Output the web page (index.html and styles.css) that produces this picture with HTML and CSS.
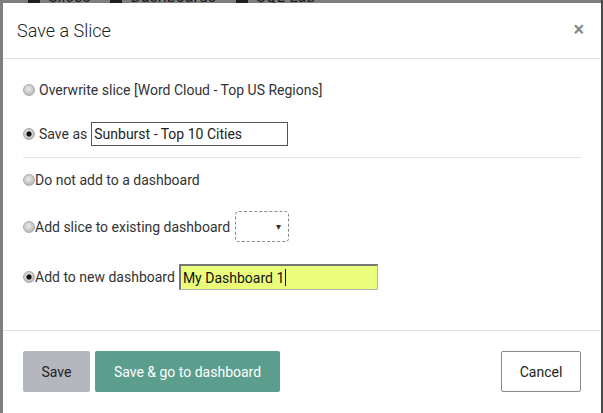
FILE: index.html
```html
<!DOCTYPE html>
<html>
<head>
<meta charset="utf-8">
<link rel="stylesheet" href="styles.css">
</head>
<body>
<div class="backdrop">
  <div class="nav"><span class="nav-item"><span class="nav-ico"></span>Slices</span><span class="nav-item"><span class="nav-ico"></span>Dashboards</span><span class="nav-item"><span class="nav-ico"></span>SQL Lab</span></div>
</div>
<div class="modal">
  <div class="modal-header">
    <h4 class="modal-title">Save a Slice</h4>
    <span class="close">×</span>
  </div>
  <div class="modal-body">
    <label class="row row-1"><input type="radio" class="radio" name="a"><span class="lbl gap">Overwrite slice [Word Cloud - Top US Regions]</span></label>
    <label class="row row-2"><input type="radio" class="radio" name="a" checked><span class="lbl gap">Save as</span><input class="text-input name-input" type="text" value="Sunburst - Top 10 Cities"></label>
    <hr class="divider">
    <label class="row row-3"><input type="radio" class="radio" name="b"><span class="lbl">Do not add to a dashboard</span></label>
    <label class="row row-4"><input type="radio" class="radio" name="b"><span class="lbl">Add slice to existing dashboard</span><span class="select"><span class="arrow">▾</span></span></label>
    <label class="row row-5"><input type="radio" class="radio" name="b" checked><span class="lbl">Add to new dashboard</span><span class="new-input">My Dashboard 1<span class="caret"></span></span></label>
  </div>
  <div class="modal-footer">
    <button class="btn btn-save">Save</button>
    <button class="btn btn-go">Save &amp; go to dashboard</button>
    <span class="spacer"></span>
    <button class="btn btn-cancel">Cancel</button>
  </div>
</div>
</body>
</html>
```

FILE: styles.css
```css
html, body {
  margin: 0;
  padding: 0;
}
body {
  width: 603px;
  height: 413px;
  overflow: hidden;
  background: #7b7b7b;
  font-family: Roboto, "Liberation Sans", sans-serif;
  color: #333;
  position: relative;
}
.backdrop {
  position: absolute;
  left: 0;
  top: 0;
  right: 0;
  height: 413px;
  background: #7e7e7e;
  border-right: 2px solid #4a4a4a;
  box-sizing: border-box;
}
.nav {
  position: absolute;
  top: -12px;
  left: 28px;
  display: flex;
  gap: 20px;
  font-size: 16px;
  line-height: 18px;
  color: #1e1e1e;
}
.nav-item {
  display: flex;
  align-items: flex-end;
  gap: 8px;
}
.nav-ico {
  width: 12px;
  height: 12px;
  background: #1e1e1e;
  margin-bottom: 3px;
}
.modal {
  position: relative;
  margin: 3px 2px 0 3px;
  width: 598px;
  height: 430px;
  background: #fff;
  box-sizing: border-box;
}
.modal-header {
  height: 55px;
  border-bottom: 1px solid #e2e2e2;
  display: flex;
  align-items: center;
  justify-content: space-between;
  padding: 0 17px 0 14px;
}
.modal-title {
  margin: 0;
  font-size: 18px;
  font-weight: 300;
  color: #222;
}
.close {
  font-size: 20px;
  font-weight: 700;
  color: #8a8a8a;
  line-height: 1;
  margin-top: -4px;
}
.modal-body {
  padding: 19px 20px 40px 20px;
  font-size: 14px;
}
.row {
  display: flex;
  align-items: center;
  height: 24px;
}
.row-2 { margin-top: 20px; }
.row-3 { margin-top: 10px; }
.row-4 { margin-top: 19px; height: 31px; }
.row-5 { margin-top: 22px; height: 26px; }
.divider {
  margin: 11px 0 0 0;
  border: 0;
  border-top: 1px solid #e3e3e3;
  height: 0;
}
.radio {
  -webkit-appearance: none;
  appearance: none;
  width: 12px;
  height: 12px;
  margin: 0;
  border-radius: 50%;
  border: 1px solid #a9a9a9;
  box-sizing: border-box;
  background: radial-gradient(circle at 45% 40%, #ececec 0, #c4c4c4 60%, #a8a8a8 100%);
  flex: none;
}
.radio:checked {
  background:
    radial-gradient(circle, #111 0, #111 2.2px, transparent 3px),
    radial-gradient(circle at 45% 40%, #ececec 0, #c4c4c4 60%, #a8a8a8 100%);
}
.lbl {
  color: #333;
  white-space: nowrap;
}
.gap { margin-left: 4px; }
.text-input {
  font-family: Roboto, "Liberation Sans", sans-serif;
  font-size: 14px;
  color: #222;
  box-sizing: border-box;
  outline: none;
}
.name-input {
  margin-left: 4px;
  width: 197px;
  height: 24px;
  border: 1px solid #555;
  padding: 0 2px;
  border-radius: 0;
}
.select {
  margin-left: 5px;
  width: 54px;
  height: 31px;
  box-sizing: border-box;
  border: 1px dashed #8a8a8a;
  border-radius: 4px;
  display: flex;
  align-items: center;
  justify-content: flex-end;
  padding-right: 7px;
}
.arrow {
  font-size: 10px;
  color: #333;
}
.new-input {
  margin-left: 4px;
  width: 199px;
  height: 26px;
  box-sizing: border-box;
  background: #ebfe7c;
  border-style: solid;
  border-width: 2px 1px 1px 2px;
  border-color: #767676 #b5b5b5 #b5b5b5 #767676;
  display: flex;
  align-items: center;
  padding-left: 2px;
  color: #111;
  font-size: 14px;
}
.caret {
  display: inline-block;
  width: 1px;
  height: 17px;
  background: #111;
  margin-left: 1px;
}
.modal-footer {
  border-top: 1px solid #e2e2e2;
  padding: 20px 20px 0 20px;
  display: flex;
  align-items: flex-start;
}
.spacer { flex: 1; }
.btn {
  font-family: Roboto, "Liberation Sans", sans-serif;
  font-size: 14px;
  height: 41px;
  border: 0;
  border-radius: 2px;
  padding: 0;
  box-sizing: border-box;
}
.btn-save {
  width: 67px;
  background: #b4b7be;
  color: #222;
}
.btn-go {
  margin-left: 5px;
  width: 185px;
  background: #5b9e8e;
  color: #fff;
}
.btn-cancel {
  width: 80px;
  background: #fff;
  border: 1px solid #8a8a8a;
  color: #222;
}
```
